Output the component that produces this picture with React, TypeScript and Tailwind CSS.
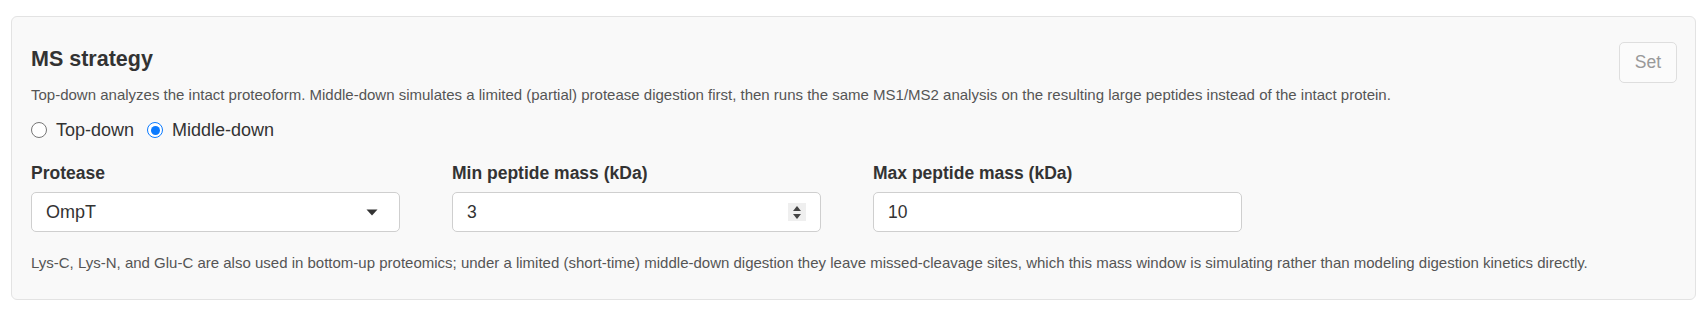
import { useState } from "react";

// ── Field wrappers ─────────────────────────────────────────────────────────
function Field({ label, children }: { label: string; children: React.ReactNode }) {
  return (
    <div className="flex w-[369px] flex-col">
      <label className="text-[17.5px] font-bold leading-[20px] text-[#333]">{label}</label>
      <div className="mt-[9px]">{children}</div>
    </div>
  );
}

function NumberBox({ value }: { value: string }) {
  return (
    <div className="flex h-[40px] items-center rounded-[5px] border border-[#cfcfcf] bg-white pl-[14px] pr-[14px]">
      <span className="flex-1 text-[17.5px] text-[#333]">{value}</span>
    </div>
  );
}

function Radio({ checked, label, onClick }: { checked: boolean; label: string; onClick: () => void }) {
  return (
    <label className="flex cursor-pointer items-center gap-[9px]" onClick={onClick}>
      <span
        className={`flex h-[16px] w-[16px] items-center justify-center rounded-full border ${
          checked ? "border-[#0a7aff] bg-white" : "border-[#777] bg-white"
        }`}
      >
        {checked && <span className="h-[9px] w-[9px] rounded-full bg-[#0a7aff]" />}
      </span>
      {label}
    </label>
  );
}

export default function App() {
  const [mode, setMode] = useState<"top" | "middle">("middle");

  return (
    <div className="min-h-[310px] bg-white pl-[11px] pr-[10px] pt-[16px]" style={{ fontFamily: '"Liberation Sans", Arial, sans-serif' }}>
      <div className="rounded-[6px] border border-[#e3e3e3] bg-[#f9f9f9] pb-[26px] pl-[19px] pr-[18px] pt-[25px]">
        {/* Header */}
        <div className="flex items-start justify-between">
          <h4 className="mt-[6px] text-[21.5px] font-bold leading-[23px] text-[#333]">MS strategy</h4>
          <button className="h-[41px] w-[58px] rounded-[5px] border border-[#dedede] bg-[#fbfbfb] text-[17.5px] text-[#999]">
            Set
          </button>
        </div>

        <p className="mt-[2px] text-[15px] leading-[20px] text-[#555]">
          Top-down analyzes the intact proteoform. Middle-down simulates a limited (partial) protease digestion first, then runs the same MS1/MS2 analysis on the resulting large peptides instead of the intact protein.
        </p>

        {/* Radios */}
        <div className="mt-[15px] flex items-center gap-[13px] text-[18px] leading-[20px] text-[#333]">
          <Radio checked={mode === "top"} label="Top-down" onClick={() => setMode("top")} />
          <Radio checked={mode === "middle"} label="Middle-down" onClick={() => setMode("middle")} />
        </div>

        {/* Inputs */}
        <div className="mt-[23px] flex gap-[52px]">
          <Field label="Protease">
            <div className="flex h-[40px] items-center justify-between rounded-[5px] border border-[#cfcfcf] bg-white pl-[14px] pr-[21px]">
              <span className="text-[18px] text-[#333]">OmpT</span>
              <svg width="12" height="7" viewBox="0 0 12 7">
                <path d="M0.5 0.5 H11.5 L6 6.5 Z" fill="#333" />
              </svg>
            </div>
          </Field>
          <Field label="Min peptide mass (kDa)">
            <div className="flex h-[40px] items-center rounded-[5px] border border-[#cfcfcf] bg-white pl-[14px] pr-[14px]">
              <span className="flex-1 text-[17.5px] text-[#333]">3</span>
              <span className="flex h-[18px] w-[18px] flex-col items-center justify-center gap-[3px] bg-[#efefef]">
                <svg width="8" height="5" viewBox="0 0 8 5">
                  <path d="M0 5 L4 0 L8 5 Z" fill="#444" />
                </svg>
                <svg width="8" height="5" viewBox="0 0 8 5">
                  <path d="M0 0 L8 0 L4 5 Z" fill="#444" />
                </svg>
              </span>
            </div>
          </Field>
          <Field label="Max peptide mass (kDa)">
            <NumberBox value="10" />
          </Field>
        </div>

        <p className="mt-[21px] text-[15px] leading-[20px] text-[#555]">
          Lys-C, Lys-N, and Glu-C are also used in bottom-up proteomics; under a limited (short-time) middle-down digestion they leave missed-cleavage sites, which this mass window is simulating rather than modeling digestion kinetics directly.
        </p>
      </div>
    </div>
  );
}
